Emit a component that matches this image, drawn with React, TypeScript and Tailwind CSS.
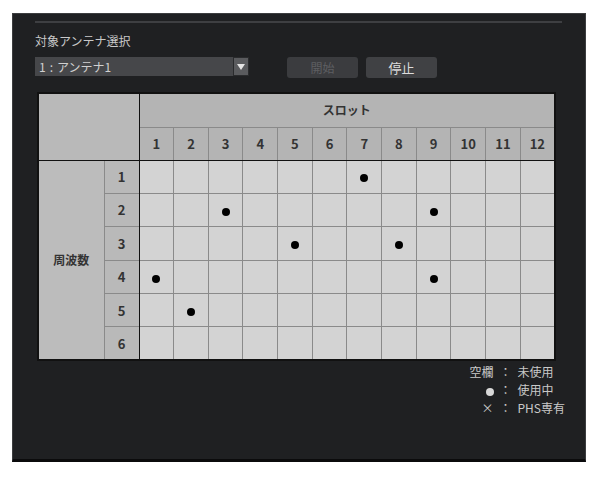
import React from "react";

const DOTS: Record<number, number[]> = {
  1: [7],
  2: [3, 9],
  3: [5, 8],
  4: [1, 9],
  5: [2],
  6: [],
};

const SLOTS = Array.from({ length: 12 }, (_, i) => i + 1);

function Dot() {
  return <span className="inline-block w-[8px] h-[8px] rounded-full bg-black align-middle" />;
}

export default function App() {
  return (
    <div
      className="w-[600px] h-[477px] bg-white pt-[13px] pl-[12px]"
      style={{ fontFamily: '"Noto Sans CJK JP", "Noto Sans", sans-serif' }}
    >
      <div className="w-[574px] h-[449px] bg-[#1f2022] border border-[#3c3d3f] border-b-[3px] border-b-[#0b0b0c] pt-[7px] pl-[22px]">
        <div className="w-[527px] h-[2px] bg-[#3e3f42]" />

        <div className="mt-[10px] text-[12px] leading-[16px] text-[#c9c9c9]">対象アンテナ選択</div>

        <div className="mt-[8px] flex items-start">
          <div className="w-[214px] h-[19px] bg-[#46474a] flex items-center justify-between">
            <span className="pl-[4px] text-[12px] leading-none text-[#d0d0d0]">
              1<span className="mx-[4px]">:</span>アンテナ1
            </span>
            <span className="w-[16px] h-[19px] bg-[#5a5b5e] border border-[#2a2b2d] flex items-center justify-center">
              <svg width="8" height="6" viewBox="0 0 8 6">
                <path d="M0 0h8L4 6z" fill="#e5e5e5" />
              </svg>
            </span>
          </div>
          <button className="ml-[38px] w-[71px] h-[21px] rounded-[3px] bg-[#3b3c3f] text-[12px] leading-none text-[#5e5f62]">
            開始
          </button>
          <button className="ml-[8px] w-[71px] h-[21px] rounded-[3px] bg-[#404144] text-[13px] leading-none text-[#dcdcdc]">
            停止
          </button>
        </div>

        <table className="mt-[14px] ml-[2px] w-[519px] table-fixed border-collapse border-2 border-[#111] text-[13px] font-bold text-[#333]">
          <colgroup>
            <col className="w-[66px]" />
            <col className="w-[35px]" />
            {SLOTS.map((s) => (
              <col key={s} />
            ))}
          </colgroup>
          <thead>
            <tr className="h-[34px]">
              <th colSpan={2} rowSpan={2} className="bg-[#b9b9b9] border-r border-b border-[#111]" />
              <th colSpan={12} className="bg-[#b4b4b4] border-b border-[#8a8a8a] text-[12px] font-bold">
                スロット
              </th>
            </tr>
            <tr className="h-[33px]">
              {SLOTS.map((s) => (
                <th
                  key={s}
                  className="bg-[#b4b4b4] border-l border-[#8a8a8a] border-b border-b-[#111] first:border-l-0 font-bold"
                >
                  {s}
                </th>
              ))}
            </tr>
          </thead>
          <tbody>
            {[1, 2, 3, 4, 5, 6].map((r) => (
              <tr key={r} className="h-[33.4px]">
                {r === 1 && (
                  <td rowSpan={6} className="bg-[#bcbcbc] border-r border-[#8a8a8a] text-center text-[12px]">
                    周波数
                  </td>
                )}
                <td className="bg-[#b9b9b9] border-t border-[#8a8a8a] border-r border-r-[#111] text-center">
                  {r}
                </td>
                {SLOTS.map((s) => (
                  <td key={s} className="bg-[#d3d3d3] border border-[#8a8a8a] text-center">
                    {DOTS[r].includes(s) && <Dot />}
                  </td>
                ))}
              </tr>
            ))}
          </tbody>
        </table>

        <div className="mt-[2px] mr-[20px] flex justify-end">
          <div className="grid grid-cols-[auto_auto_auto] gap-x-[6px] text-[12px] leading-[18px] text-[#c9c9c9]">
            <span className="text-right">空欄</span>
            <span>：</span>
            <span>未使用</span>
            <span className="text-right">
              <span className="inline-block w-[8px] h-[8px] rounded-full bg-[#d8d8d8] align-middle" />
            </span>
            <span>：</span>
            <span>使用中</span>
            <span className="text-right">×</span>
            <span>：</span>
            <span>PHS専有</span>
          </div>
        </div>
      </div>
    </div>
  );
}
